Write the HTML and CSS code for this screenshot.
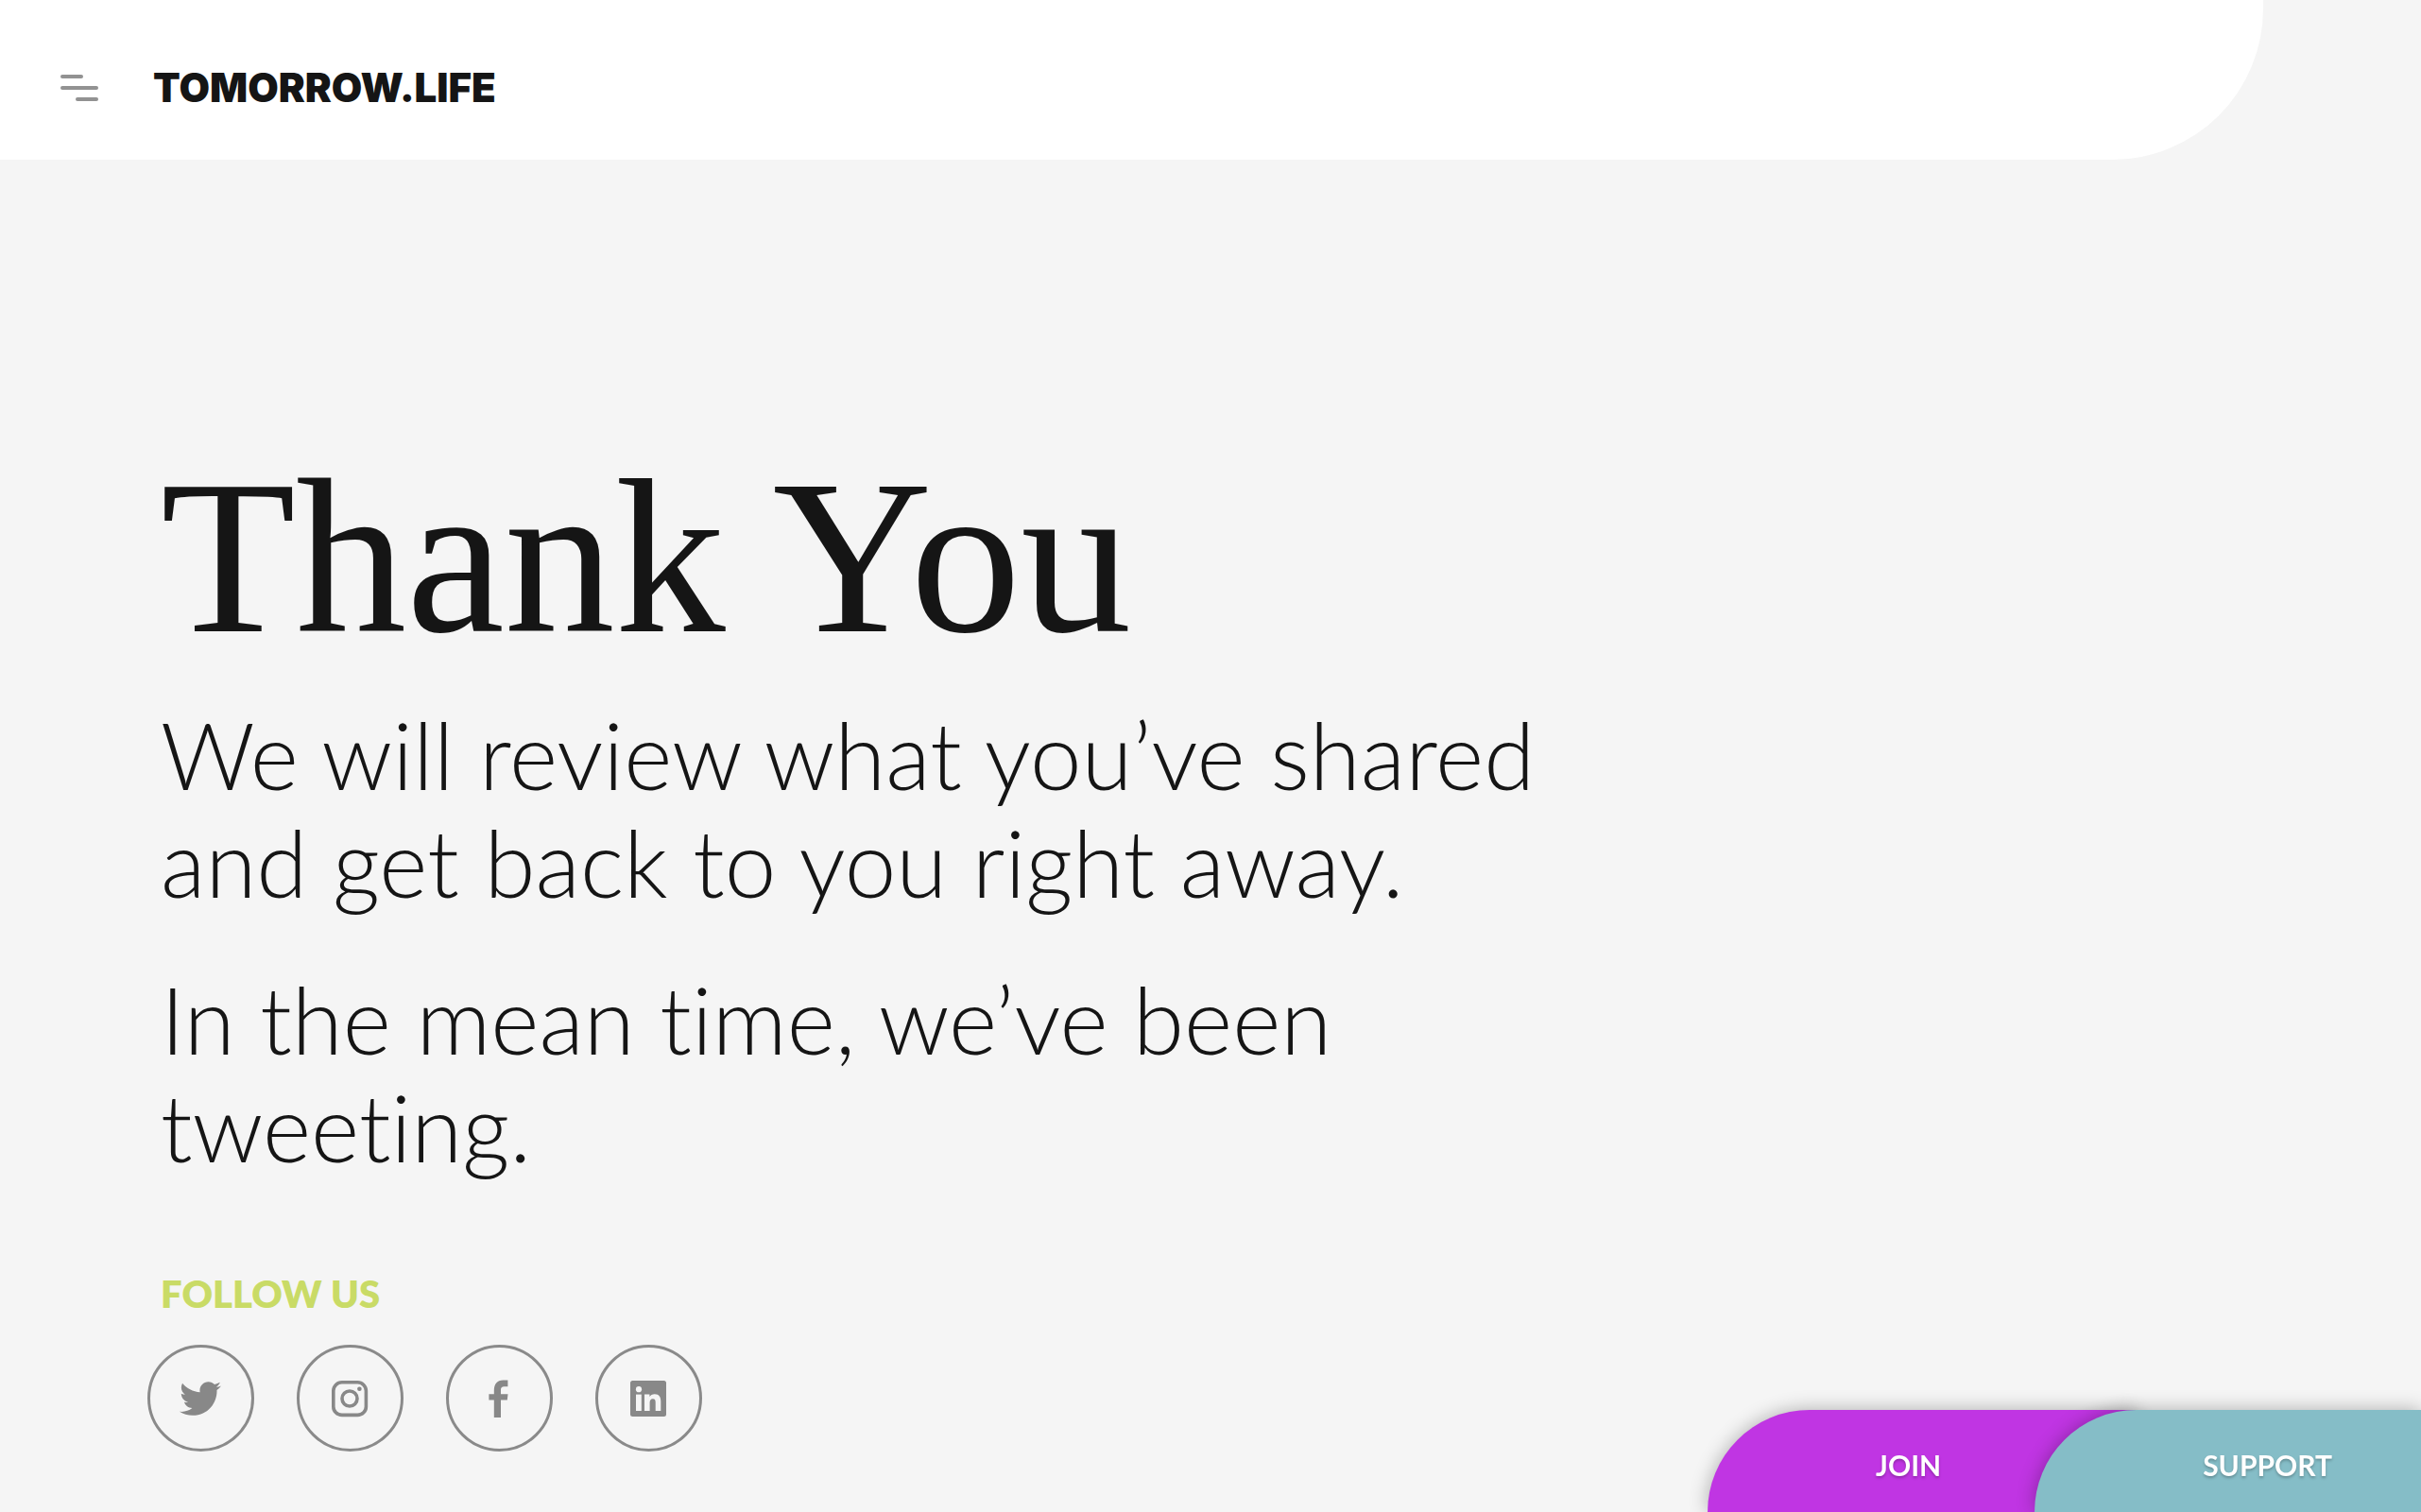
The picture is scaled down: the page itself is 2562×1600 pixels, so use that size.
FILE: index.html
```html
<!DOCTYPE html>
<html lang="en">
<head>
    <meta charset="UTF-8">
    <meta name="viewport" content="width=device-width, initial-scale=1.0">
    <title>Thank You - Tomorrow.Life</title>
    <link rel="stylesheet" href="styles.css">
</head>
<body>
    <header class="site-header">
        <button class="menu-btn" aria-label="Open menu">
            <span class="bar bar-short"></span>
            <span class="bar"></span>
            <span class="bar bar-short bar-right"></span>
        </button>
        <a href="#" class="logo">TOMORROW.LIFE</a>
    </header>

    <main class="content">
        <h1>Thank You</h1>
        <div class="message">
            <p>We will review what you’ve shared and get back to you right away.</p>
            <p>In the mean time, we’ve been tweeting.</p>
        </div>

        <h2>FOLLOW US</h2>
        <div class="social-links">
            <a href="#" class="social-link" aria-label="Twitter">
                <svg viewBox="0 0 512 512" fill="currentColor"><path d="M459.37 151.716c.325 4.548.325 9.097.325 13.645 0 138.72-105.583 298.558-298.558 298.558-59.452 0-114.68-17.219-161.137-47.106 8.447.974 16.568 1.299 25.34 1.299 49.055 0 94.213-16.568 130.274-44.832-46.132-.975-84.792-31.188-98.112-72.772 6.498.974 12.995 1.624 19.818 1.624 9.421 0 18.843-1.3 27.614-3.573-48.081-9.747-84.143-51.98-84.143-102.985v-1.299c13.969 7.797 30.214 12.67 47.431 13.319-28.264-18.843-46.781-51.005-46.781-87.391 0-19.492 5.197-37.36 14.294-52.954 51.655 63.675 129.3 105.258 216.365 109.807-1.624-7.797-2.599-15.918-2.599-24.04 0-57.828 46.782-104.934 104.934-104.934 30.213 0 57.502 12.67 76.67 33.137 23.715-4.548 46.456-13.32 66.599-25.34-7.798 24.366-24.366 44.833-46.132 57.827 21.117-2.273 41.584-8.122 60.426-16.243-14.292 20.791-32.161 39.308-52.628 54.253z"/></svg>
            </a>
            <a href="#" class="social-link" aria-label="Instagram">
                <svg viewBox="0 0 44 44" fill="none" stroke="currentColor" stroke-width="3.6">
                    <rect x="4.8" y="4.8" width="34.6" height="34.6" rx="9"/>
                    <circle cx="22" cy="22" r="8"/>
                    <circle cx="32.4" cy="11.8" r="2.3" fill="currentColor" stroke="none"/>
                </svg>
            </a>
            <a href="#" class="social-link" aria-label="Facebook">
                <svg viewBox="0 0 44 44" fill="currentColor"><path d="M16.8 42V23.6H11.4v-6.4h5.4v-3.4C16.8 6.6 20 2.6 26.4 2.6h5v6.6h-3.8c-2.6 0-3.6 1.2-3.6 3.6v4.4h7.5l-.7 6.4H24V42z"/></svg>
            </a>
            <a href="#" class="social-link" aria-label="LinkedIn">
                <svg viewBox="0 0 44 44">
                    <rect x="3" y="3" width="38" height="38" rx="2.5" fill="currentColor"/>
                    <g fill="#f5f5f5">
                        <circle cx="12" cy="12.2" r="3.1"/>
                        <rect x="9" y="17.6" width="5.8" height="17.4"/>
                        <path d="M18 17.6h5.4v2.4c1-1.7 2.9-2.8 5.4-2.8 4.8 0 6.5 3.2 6.5 8V35h-5.6v-8.8c0-2.4-.6-4-2.8-4-2.4 0-3.3 1.8-3.3 4V35H18z"/>
                    </g>
                </svg>
            </a>
        </div>
    </main>

    <nav class="bottom-nav">
        <a href="#" class="tab tab-join">JOIN</a>
        <a href="#" class="tab tab-support">SUPPORT</a>
    </nav>
</body>
</html>
```
FILE: styles.css
```css
/* Base styles */
* {
    margin: 0;
    padding: 0;
    box-sizing: border-box;
}

body {
    font-family: Lato, sans-serif;
    color: #151515;
    background-color: #f5f5f5;
    min-height: 100vh;
}

a {
    color: inherit;
    text-decoration: none;
}

/* Header */
.site-header {
    display: flex;
    align-items: center;
    gap: 58px;
    width: 93.5%;
    padding: 69px 64px 52px;
    background-color: #fff;
    border-bottom-right-radius: 160px;
}

.menu-btn {
    display: flex;
    flex-direction: column;
    gap: 8px;
    width: 40px;
    background: none;
    border: none;
    cursor: pointer;
}

.bar {
    width: 40px;
    height: 4px;
    border-radius: 2px;
    background-color: #929292;
}

.bar-short {
    width: 24px;
}

.bar-right {
    align-self: flex-end;
}

.logo {
    font-family: Inter, sans-serif;
    font-size: 42px;
    font-weight: 900;
    line-height: 48px;
}

/* Content */
.content {
    padding: 304px 170px 64px;
}

h1 {
    font-family: "Liberation Serif", serif;
    font-size: 234px;
    font-weight: 400;
    line-height: 232px;
    margin-bottom: 36px;
}

.message {
    max-width: 1500px;
    margin-bottom: 96px;
    font-size: 98px;
    font-weight: 300;
    line-height: 114px;
    font-variant-ligatures: no-common-ligatures;
}

.message p + p {
    margin-top: 52px;
}

h2 {
    color: #c9db66;
    font-size: 40px;
    font-weight: 800;
    line-height: 48px;
    margin-bottom: 30px;
}

/* Social links */
.social-links {
    display: flex;
    gap: 45px;
    margin-left: -14px;
}

.social-link {
    display: flex;
    align-items: center;
    justify-content: center;
    width: 113px;
    height: 113px;
    padding-right: 2px;
    border: 3px solid #8a8a8a;
    border-radius: 50%;
    color: #888;
}

.social-link svg {
    width: 44px;
    height: 44px;
}

/* Bottom tabs */
.bottom-nav {
    position: fixed;
    right: 0;
    bottom: 0;
    display: flex;
}

.tab {
    height: 108px;
    padding: 0 94px 0 178px;
    border-top-left-radius: 108px;
    box-shadow: 0 0 20px rgba(0, 0, 0, 0.3);
    color: #fff;
    font-size: 30px;
    font-weight: 700;
    line-height: 116px;
    text-shadow: 0 2px 3px rgba(0, 0, 0, 0.25);
}

.tab-join {
    padding-right: 207px;
    background-color: #c035e3;
}

.tab-support {
    margin-left: -108px;
    background-color: #85bdc7;
}
```
